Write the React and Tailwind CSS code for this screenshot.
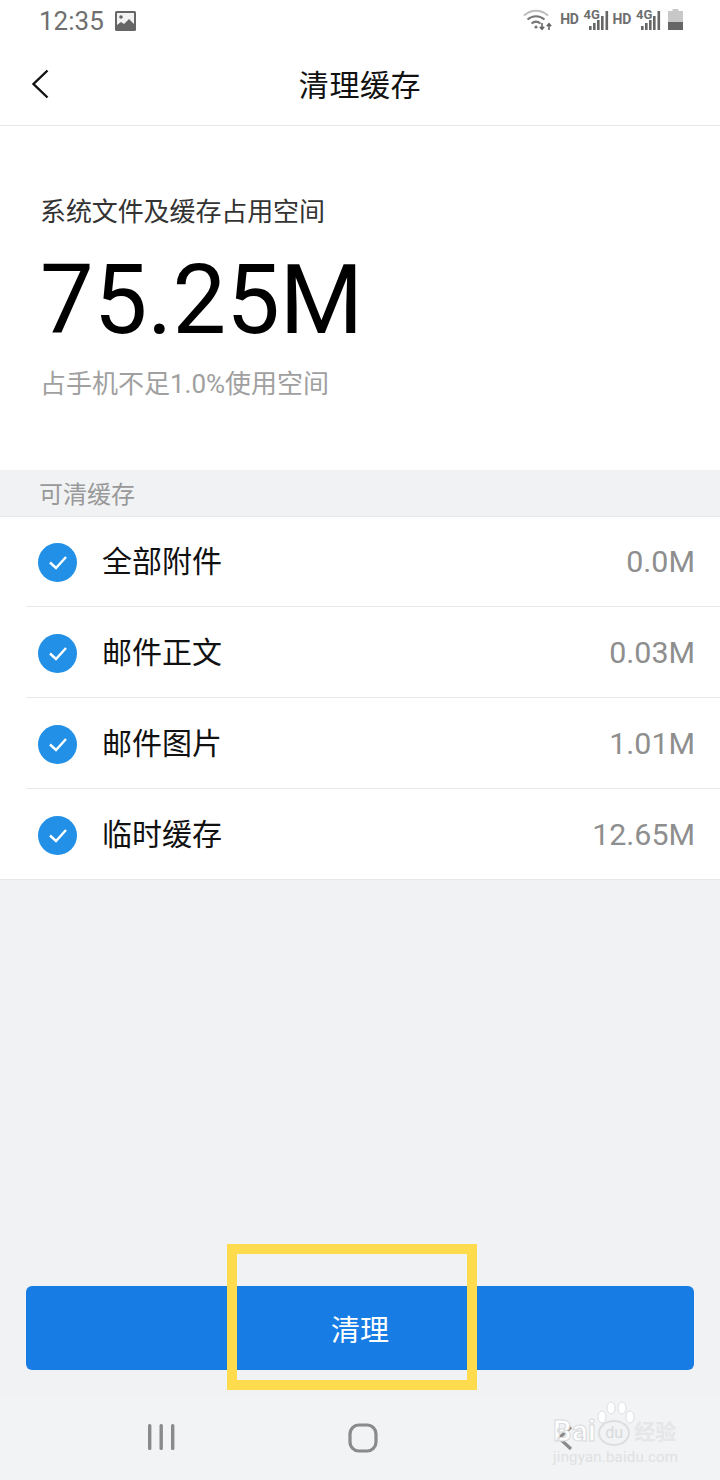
const rows = [
  { name: '全部附件', size: '0.0M' },
  { name: '邮件正文', size: '0.03M' },
  { name: '邮件图片', size: '1.01M' },
  { name: '临时缓存', size: '12.65M' },
]

function SignalGroup() {
  return (
    <div className="flex items-start">
      <span className="mt-[11px] text-[14px] leading-[16px] font-bold tracking-[-0.3px] text-[#6e6e6e]">HD</span>
      <div className="relative ml-[5px] h-[30px] w-[26px]">
        <span className="absolute top-[8px] left-0 text-[13px] leading-[14px] font-bold text-[#6e6e6e]">4G</span>
        <svg className="absolute top-[10px] left-[5px]" width="21" height="21" viewBox="0 0 21 21" fill="#666">
          <rect x="0" y="16" width="2.6" height="4" />
          <rect x="4" y="13" width="2.6" height="7" />
          <rect x="8" y="10" width="2.6" height="10" />
          <rect x="12" y="6" width="2.6" height="14" />
          <rect x="16.5" y="1" width="2.6" height="19" />
        </svg>
      </div>
    </div>
  )
}

function StatusBar() {
  return (
    <div className="flex h-[46px] items-start justify-between pr-[37px] pl-[39px]">
      <div className="flex items-center pt-[6px]">
        <span className="text-[26px] leading-[30px] text-[#6f6f6f]">12:35</span>
        <svg className="ml-[11px]" width="21" height="20" viewBox="0 0 21 20">
          <rect width="21" height="20" rx="1.5" fill="#666" />
          <rect x="2" y="2" width="17" height="16" fill="#f2f2f2" />
          <circle cx="6" cy="6" r="1.8" fill="#666" />
          <path d="M2 18v-4l4-3 3 2 5-5 5 5v5z" fill="#666" />
        </svg>
      </div>
      <div className="flex items-start">
        <svg className="mt-[8px]" width="30" height="24" viewBox="0 0 30 24" fill="none">
          <path d="M1 7.5C8 1 18 1 25 7.5" stroke="#bdbdbd" strokeWidth="2" />
          <path d="M4.5 11.5C9.5 7 16.5 7 21.5 11.5" stroke="#777" strokeWidth="2" />
          <path d="M8.5 15.5C11.5 13 14.5 13 17.5 15.5" stroke="#777" strokeWidth="2" />
          <circle cx="13" cy="19" r="1.6" fill="#777" />
          <path d="M19 15v6M16.8 18.8l2.2 2.4 2.2-2.4" stroke="#666" strokeWidth="1.6" />
          <path d="M26 22v-6M23.8 18.2l2.2-2.4 2.2 2.4" stroke="#666" strokeWidth="1.6" />
        </svg>
        <div className="ml-[7px]">
          <SignalGroup />
        </div>
        <div className="ml-[3px]">
          <SignalGroup />
        </div>
        <svg className="mt-[9px] ml-[6px]" width="15" height="22" viewBox="0 0 15 22">
          <rect x="4.5" y="0" width="6" height="3" fill="#c8c8c8" />
          <rect x="0" y="2" width="15" height="11" fill="#c8c8c8" />
          <rect x="0" y="13" width="15" height="8" fill="#666" />
        </svg>
      </div>
    </div>
  )
}

function CheckRow({ name, size }) {
  return (
    <div className="ml-[26px] flex h-[91px] items-center border-b border-[#e6e8ea] pt-[2px] pr-[25px] pl-[12px]">
      <span className="flex h-[39px] w-[39px] items-center justify-center rounded-full bg-[#2190e6]">
        <svg width="22" height="18" viewBox="0 0 22 18" fill="none">
          <path d="M3 9.5l6 5.5L19 4" stroke="#fff" strokeWidth="2.4" />
        </svg>
      </span>
      <span className="ml-[25px] text-[30px] leading-[40px] text-[#111]">{name}</span>
      <span className="ml-auto text-[30.4px] leading-[40px] text-[#8e8e8e]">{size}</span>
    </div>
  )
}

export default function App() {
  return (
    <div className="relative flex h-[1480px] w-[720px] flex-col overflow-hidden bg-[#f0f2f4] font-['Roboto','Noto_Sans_CJK_SC',sans-serif]">
      <div className="bg-white">
        <StatusBar />
        <header className="relative flex h-[80px] items-center justify-center border-b border-[#e4e6e8]">
          <svg className="absolute top-[23px] left-[31px]" width="18" height="30" viewBox="0 0 18 30" fill="none">
            <path d="M16.5 1.5L2.5 15l14 13.5" stroke="#111" strokeWidth="2.4" />
          </svg>
          <h1 className="text-[30px] leading-[40px] font-normal tracking-[0.6px] text-[#111]">清理缓存</h1>
        </header>
      </div>

      <section className="h-[344px] bg-white px-[40px] pt-[68px]">
        <p className="text-[26px] leading-[36px] tracking-[-0.1px] text-[#333]">系统文件及缓存占用空间</p>
        <p className="mt-[15px] text-[95.5px] leading-[110px] text-black">75.25M</p>
        <p className="mt-[11px] text-[26px] leading-[36px] text-[#a0a0a0]">占手机不足1.0%使用空间</p>
      </section>

      <div className="relative z-10 flex h-[47px] items-center border-b border-[#e6e8ea] pt-[3px] pl-[39px] text-[24px] text-[#999]">可清缓存</div>

      <div className="-mt-px border-b border-[#e6e8ea] bg-white">
        {rows.map((row, i) => (
          <div key={row.name} className={i === rows.length - 1 ? '-mb-px' : ''}>
            <CheckRow name={row.name} size={row.size} />
          </div>
        ))}
      </div>

      <div className="mt-auto px-[26px]">
        <button type="button" className="flex h-[84px] w-full items-center justify-center rounded-[6px] bg-[#177ce4] pt-[7px] text-[29px] text-white">
          清理
        </button>
      </div>

      <nav className="mt-[27px] flex h-[83px] items-start bg-[#f2f3f4] pt-[26px]">
        <svg className="ml-[148px]" width="27" height="28" viewBox="0 0 27 28" fill="#8a8a8a">
          <rect x="0" y="1" width="3.4" height="26" rx="1.5" />
          <rect x="11.5" y="1" width="3.4" height="26" rx="1.5" />
          <rect x="23" y="1" width="3.4" height="26" rx="1.5" />
        </svg>
        <svg className="ml-[173px]" width="30" height="30" viewBox="0 0 30 30" fill="none">
          <rect x="2" y="2" width="26" height="26" rx="9" stroke="#8a8a8a" strokeWidth="3.2" />
        </svg>
        <svg className="mt-[2px] ml-[178px]" width="18" height="26" viewBox="0 0 18 26" fill="none">
          <path d="M15 2L3 13l12 11" stroke="#8a8a8a" strokeWidth="3.2" />
        </svg>
      </nav>

      {/* yellow highlight round the button */}
      <div className="absolute top-[1244px] left-[227px] h-[146px] w-[250px] border-[10px] border-[#fedc4d]" />

      {/* watermark */}
      <div className="absolute top-[1402px] left-[553px] w-[160px]">
        <div className="relative flex h-[44px] items-end">
          <span className="text-[29px] leading-[30px] font-bold tracking-[0.5px] text-white [-webkit-text-stroke:1px_#d8dadc]">Bai</span>
          <span className="ml-[2px] flex h-[26px] w-[32px] items-center justify-center rounded-[50%] border-2 border-[#dcdee0] text-[16px] leading-[20px] text-[#d8dadc]">du</span>
          <span className="ml-[4px] text-[21px] leading-[28px] font-bold text-[#e4e6e8]">经验</span>
          <svg className="absolute top-[-1px] left-[44px]" width="38" height="24" viewBox="0 0 38 24" fill="#fff" stroke="#dcdee0">
            <ellipse cx="5" cy="16" rx="4" ry="6" />
            <ellipse cx="14" cy="7" rx="4" ry="6" />
            <ellipse cx="25" cy="7" rx="4" ry="6" />
            <ellipse cx="33" cy="16" rx="4" ry="6" />
          </svg>
        </div>
        <p className="mt-[2px] text-[15px] leading-[18px] tracking-[0.2px] text-[#dfe1e3]">jingyan.baidu.com</p>
      </div>
    </div>
  )
}
